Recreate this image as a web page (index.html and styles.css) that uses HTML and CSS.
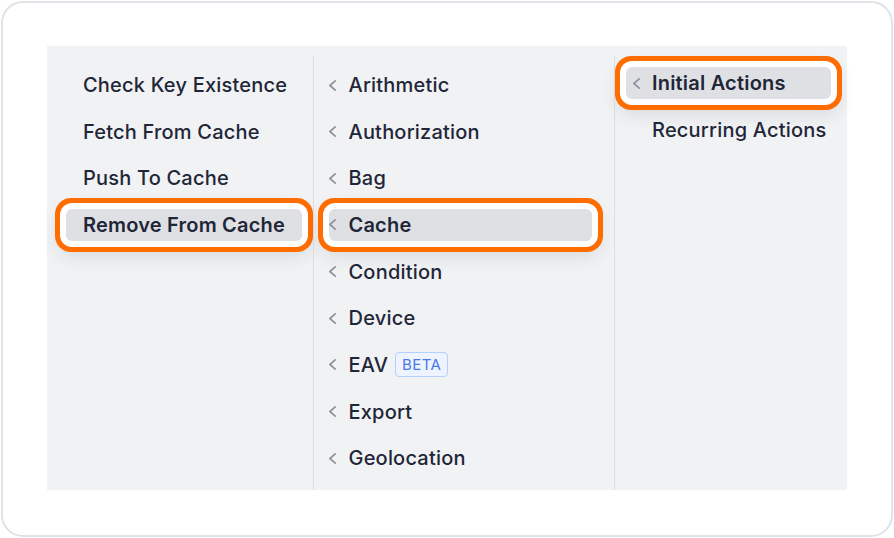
FILE: index.html
```html
<!DOCTYPE html>
<html lang="en">
<head>
<meta charset="utf-8">
<title>Menu</title>
<link rel="stylesheet" href="styles.css">
</head>
<body>
<div class="card">
  <div class="panel">
    <ul class="col col-1">
      <li class="item">Check Key Existence</li>
      <li class="item">Fetch From Cache</li>
      <li class="item">Push To Cache</li>
      <li class="item active">Remove From Cache</li>
    </ul>
    <ul class="col col-2">
      <li class="item"><span class="chev"><svg viewBox="0 0 7 11"><path d="M6.2 0.8 L0.9 5.5 L6.2 10.2"/></svg></span>Arithmetic</li>
      <li class="item"><span class="chev"><svg viewBox="0 0 7 11"><path d="M6.2 0.8 L0.9 5.5 L6.2 10.2"/></svg></span>Authorization</li>
      <li class="item"><span class="chev"><svg viewBox="0 0 7 11"><path d="M6.2 0.8 L0.9 5.5 L6.2 10.2"/></svg></span>Bag</li>
      <li class="item active"><span class="chev"><svg viewBox="0 0 7 11"><path d="M6.2 0.8 L0.9 5.5 L6.2 10.2"/></svg></span>Cache</li>
      <li class="item"><span class="chev"><svg viewBox="0 0 7 11"><path d="M6.2 0.8 L0.9 5.5 L6.2 10.2"/></svg></span>Condition</li>
      <li class="item"><span class="chev"><svg viewBox="0 0 7 11"><path d="M6.2 0.8 L0.9 5.5 L6.2 10.2"/></svg></span>Device</li>
      <li class="item"><span class="chev"><svg viewBox="0 0 7 11"><path d="M6.2 0.8 L0.9 5.5 L6.2 10.2"/></svg></span>EAV<span class="badge">BETA</span></li>
      <li class="item"><span class="chev"><svg viewBox="0 0 7 11"><path d="M6.2 0.8 L0.9 5.5 L6.2 10.2"/></svg></span>Export</li>
      <li class="item"><span class="chev"><svg viewBox="0 0 7 11"><path d="M6.2 0.8 L0.9 5.5 L6.2 10.2"/></svg></span>Geolocation</li>
    </ul>
    <ul class="col col-3">
      <li class="item active"><span class="chev"><svg viewBox="0 0 7 11"><path d="M6.2 0.8 L0.9 5.5 L6.2 10.2"/></svg></span>Initial Actions</li>
      <li class="item"><span class="chev"></span>Recurring Actions</li>
    </ul>
  </div>
</div>
</body>
</html>
```

FILE: styles.css
```css
* { box-sizing: border-box; }
html, body { margin: 0; padding: 0; background: #ffffff; }
body {
  font-family: Inter, "Noto Sans", "Liberation Sans", sans-serif;
  color: #1f2638;
}
.card {
  margin: 1px;
  width: 892px;
  height: 536px;
  border: 2px solid #dfe2e6;
  border-radius: 22px;
  padding: 43px 44px;
  background: #fff;
}
.panel {
  width: 800px;
  height: 444px;
  background: #f1f2f4;
  display: grid;
  grid-template-columns: 266px 301px 233px;
  padding-top: 10px;
}
.col {
  list-style: none;
  margin: 0;
  padding: 13px 0 0 0;
  display: flex;
  flex-direction: column;
  gap: 14.67px;
}
.col-2, .col-3 { border-left: 1.5px solid #dcdee2; }
.col-1 { padding-left: 19px; padding-right: 11px; }
.col-2 { padding-left: 15px; padding-right: 22px; }
.col-3 { padding-left: 11px; padding-right: 16px; padding-top: 11px; }
.item {
  height: 32px;
  display: flex;
  align-items: center;
  font-size: 20px;
  font-weight: 500;
  border-radius: 6px;
  white-space: nowrap;
  letter-spacing: 0.2px;
}
.col-1 .item { padding-left: 17px; }
.col-2 .item { padding-left: 0; }
.col-3 .item { padding-left: 6.5px; }
.item.active {
  background: #dfe0e4;
  font-weight: 600;
  box-shadow: 0 0 0 6px #ffffff, 0 0 0 11px #ff6c00, 0 8px 18px 8px rgba(20, 25, 40, 0.10);
}
.chev {
  width: 7px;
  height: 11px;
  margin-right: 12.5px;
  display: flex;
  flex: none;
}
.chev svg { width: 7px; height: 11px; overflow: visible; }
.chev path {
  fill: none;
  stroke: #8e939b;
  stroke-width: 1.7;
  stroke-linecap: round;
  stroke-linejoin: round;
}
.badge {
  margin-left: 7px;
  height: 25px;
  padding: 0 6px;
  display: inline-flex;
  align-items: center;
  font-size: 15px;
  font-weight: 400;
  color: #4a78e8;
  background: #eef4ff;
  border: 1px solid #b6cffb;
  border-radius: 4px;
  letter-spacing: 0.4px;
}
```
